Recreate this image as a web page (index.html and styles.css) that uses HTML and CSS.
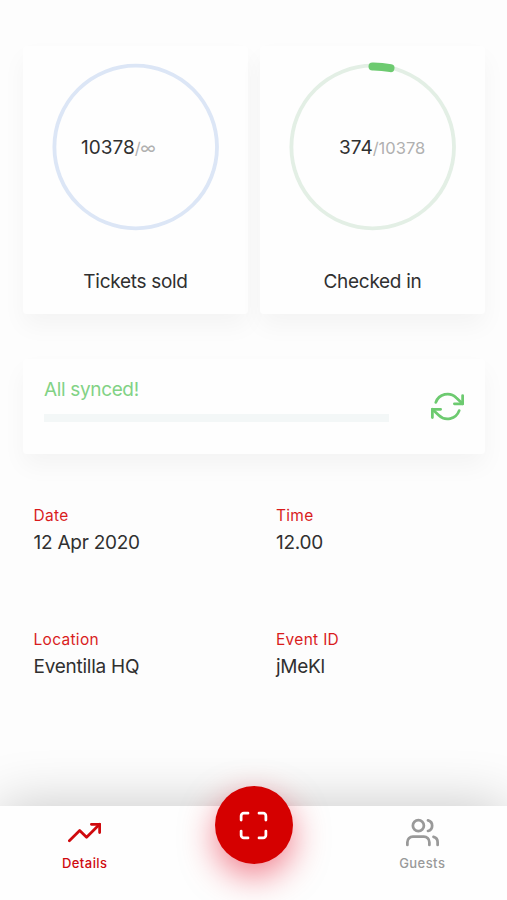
FILE: index.html
```html
<!DOCTYPE html>
<html lang="en">

<head>
  <meta charset="UTF-8">
  <meta name="viewport" content="width=device-width, initial-scale=1.0">
  <title>Event details</title>
  <link rel="stylesheet" href="styles.css">
</head>

<body>
  <main class="page">
    <section class="stats">
      <div class="card stat">
        <div class="ring sold">
          <svg viewBox="0 0 168 168">
            <circle class="track" cx="83.7" cy="84" r="81.3" />
          </svg>
          <p class="count"><span class="num">10378</span><span class="total">/∞</span></p>
        </div>
        <h2 class="stat-title">Tickets sold</h2>
      </div>
      <div class="card stat">
        <div class="ring checked">
          <svg viewBox="0 0 168 168">
            <circle class="track" cx="83.7" cy="84" r="81.3" />
            <path class="progress" d="M83.5 3.4 A81 81 0 0 1 101.5 5.2" />
          </svg>
          <p class="count"><span class="num">374</span><span class="total">/10378</span></p>
        </div>
        <h2 class="stat-title">Checked in</h2>
      </div>
    </section>

    <section class="card sync">
      <div class="sync-body">
        <p class="sync-text">All synced!</p>
        <div class="bar"></div>
      </div>
      <svg class="icon" viewBox="0 0 24 24">
        <polyline points="23 4 23 10 17 10" />
        <polyline points="1 20 1 14 7 14" />
        <path d="M3.51 9a9 9 0 0 1 14.85-3.36L23 10M1 14l4.64 4.36A9 9 0 0 0 20.49 15" />
      </svg>
    </section>

    <dl class="info">
      <div class="info-item">
        <dt>Date</dt>
        <dd>12 Apr 2020</dd>
      </div>
      <div class="info-item">
        <dt>Time</dt>
        <dd>12.00</dd>
      </div>
      <div class="info-item">
        <dt>Location</dt>
        <dd>Eventilla HQ</dd>
      </div>
      <div class="info-item">
        <dt>Event ID</dt>
        <dd>jMeKl</dd>
      </div>
    </dl>
  </main>

  <nav class="tabs">
    <a class="tab active">
      <svg class="icon" viewBox="0 0 24 24">
        <polyline points="23 6 13.5 15.5 8.5 10.5 1 18" />
        <polyline points="17 6 23 6 23 12" />
      </svg>
      <span>Details</span>
    </a>
    <a class="scan">
      <svg class="icon" viewBox="0 0 24 24">
        <path d="M8 3H5a2 2 0 0 0-2 2v3m18 0V5a2 2 0 0 0-2-2h-3m0 18h3a2 2 0 0 0 2-2v-3M3 16v3a2 2 0 0 0 2 2h3" />
      </svg>
    </a>
    <a class="tab">
      <svg class="icon" viewBox="0 0 24 24">
        <path d="M17 21v-2a4 4 0 0 0-4-4H5a4 4 0 0 0-4 4v2" />
        <circle cx="9" cy="7" r="4" />
        <path d="M23 21v-2a4 4 0 0 0-3-3.87M16 3.13a4 4 0 0 1 0 7.75" />
      </svg>
      <span>Guests</span>
    </a>
  </nav>
</body>

</html>
```
FILE: styles.css
```css
* {
  box-sizing: border-box;
  margin: 0;
  padding: 0;
}

body {
  display: flex;
  flex-direction: column;
  height: 900px;
  overflow: hidden;
  font-family: Inter, "Liberation Sans", sans-serif;
  font-size: 19px;
  color: #303030;
  background: #fdfdfd;
}

.page {
  flex: 1;
  padding: 46px 22px 0 23px;
}

.card {
  background: #fefefe;
  border-radius: 4px;
  box-shadow: 0 12px 24px rgba(0, 0, 0, 0.04);
}

.icon {
  display: block;
  width: 33px;
  height: 33px;
  fill: none;
  stroke: currentColor;
  stroke-width: 2;
  stroke-linecap: round;
  stroke-linejoin: round;
}

.stats {
  display: grid;
  grid-template-columns: 1fr 1fr;
  gap: 12px;
}

.stat {
  display: flex;
  flex-direction: column;
  align-items: center;
  height: 268px;
  padding-top: 17px;
}

.ring {
  display: grid;
  width: 168px;
  height: 168px;
}

.ring svg,
.count {
  grid-area: 1 / 1;
}

.ring svg {
  overflow: visible;
  fill: none;
}

.track {
  stroke-width: 3.8;
}

.sold .track {
  stroke: #dce6f6;
}

.checked .track {
  stroke: #e3efe5;
}

.progress {
  stroke: #6dca70;
  stroke-width: 8;
  stroke-linecap: round;
}

.count {
  align-self: center;
  padding-top: 1px;
  line-height: 24px;
  white-space: nowrap;
}

.sold .count {
  padding-left: 29.5px;
}

.checked .count {
  padding-left: 50.5px;
}

.total {
  font-size: 16.5px;
  color: #b0b0b0;
}

.sold .total {
  letter-spacing: -0.4px;
}

.stat-title {
  margin-top: 39px;
  font-size: 19px;
  font-weight: 400;
  line-height: 24px;
  letter-spacing: -0.3px;
}

.sync {
  display: flex;
  align-items: center;
  justify-content: space-between;
  height: 95px;
  margin-top: 45px;
  padding: 0 21px;
}

.sync-body {
  align-self: flex-start;
  width: 345px;
  padding-top: 19px;
}

.sync-text {
  line-height: 24px;
  letter-spacing: -0.35px;
  color: #82d285;
}

.bar {
  height: 8px;
  margin-top: 12px;
  background: #f3f7f7;
}

.sync .icon {
  color: #6dca70;
}

.info {
  display: grid;
  grid-template-columns: 242.5px 1fr;
  row-gap: 74px;
  margin-top: 51px;
  padding-left: 10.5px;
}

.info-item {
  height: 50px;
}

.info dt {
  font-size: 15.5px;
  line-height: 22px;
  letter-spacing: 0.3px;
  color: #d91c1c;
}

.info dd {
  margin-top: 3px;
  line-height: 26px;
  letter-spacing: -0.25px;
}

.tabs {
  position: relative;
  display: grid;
  grid-template-columns: 1fr 168px 1fr;
  justify-items: center;
  height: 94px;
  background: #fefefe;
  box-shadow: 0 0 55px rgba(0, 0, 0, 0.22);
}

.tab {
  display: flex;
  flex-direction: column;
  align-items: center;
  padding-top: 10px;
  color: #999;
}

.tab span {
  margin-top: 5px;
  font-size: 13px;
  font-weight: 500;
  line-height: 18px;
  letter-spacing: 0.45px;
}

.tab.active {
  color: #cf0a0e;
}

.scan {
  display: flex;
  align-items: center;
  justify-content: center;
  width: 78px;
  height: 78px;
  /* lifts the button over the bar's top edge */
  margin-top: -20px;
  border-radius: 50%;
  color: #fff;
  background: #d50000;
  box-shadow: 0 12px 34px rgba(230, 0, 30, 0.5);
}
```
